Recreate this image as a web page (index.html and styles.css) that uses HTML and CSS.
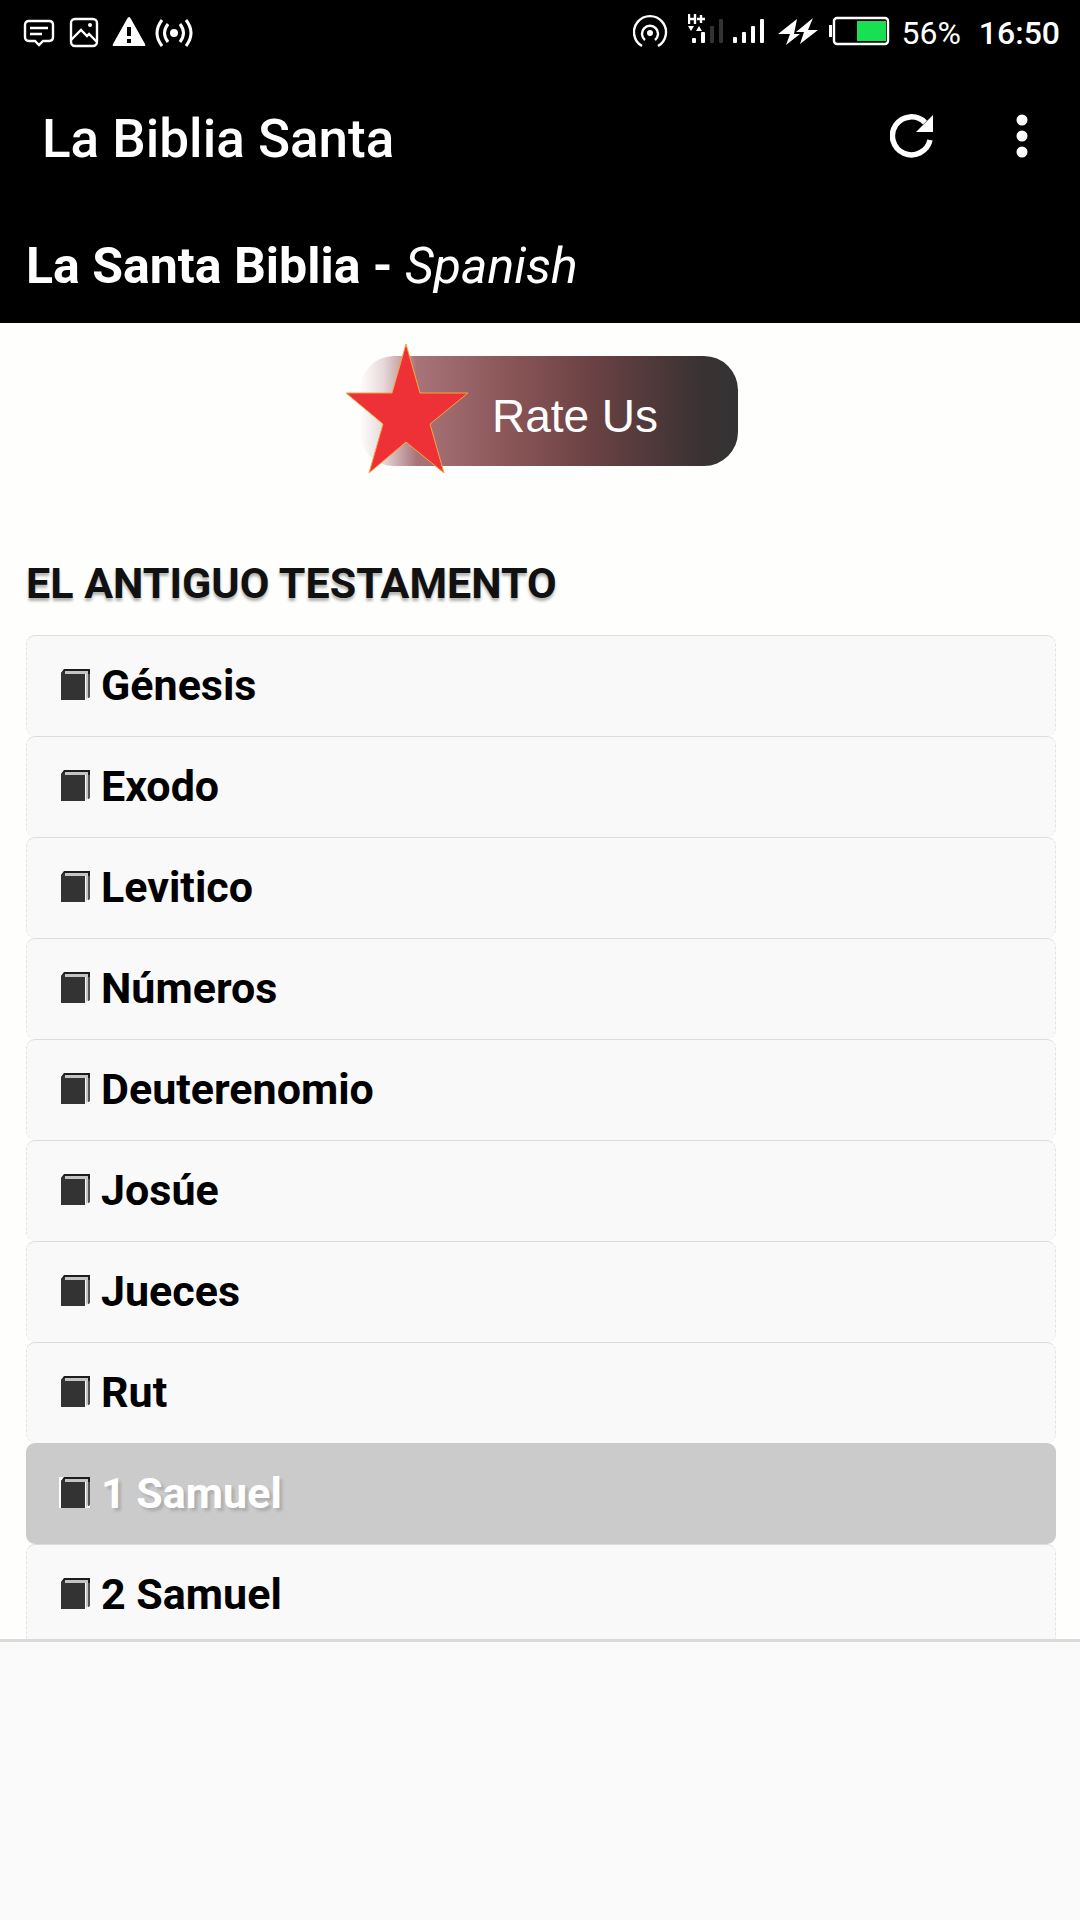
FILE: index.html
```html
<!DOCTYPE html>
<html lang="es">
<head>
    <meta charset="UTF-8">
    <meta name="viewport" content="width=device-width, initial-scale=1.0">
    <title>La Biblia Santa</title>
    <link rel="stylesheet" href="styles.css">
</head>
<body>
    <div class="status-bar">
        <div class="status-left">
            <svg width="38" height="36" viewBox="0 0 38 36" fill="none" stroke="#fff" stroke-width="2.400">
                <path d="M9 6h20q4 0 4 4v12q0 4-4 4h-6l-4 4-4-4H9q-4 0-4-4V10q0-4 4-4zM10 13h18M10 19h12"/>
            </svg>
            <svg width="38" height="36" viewBox="0 0 38 36" fill="none" stroke="#fff" stroke-width="2.400">
                <rect x="6" y="4" width="26" height="27" rx="4"/>
                <path d="M6 25l10-10 6 6 2-2 8 8"/>
                <circle cx="25" cy="10" r="2" fill="#fff" stroke="none"/>
            </svg>
            <svg width="38" height="36" viewBox="0 0 38 36">
                <path d="M19 2q1 0 2 2l14 25q1 2-1 2H4q-2 0-1-2L17 4q1-2 2-2z" fill="#fff"/>
                <path d="M17 12h4v9h-4zM17 24h4v4h-4z" fill="#000"/>
            </svg>
            <svg width="38" height="36" viewBox="0 0 38 36" fill="none" stroke="#fff" stroke-width="3">
                <circle cx="19" cy="18" r="4" fill="#fff" stroke="none"/>
                <path d="M13 9q-7 9 0 18M25 9q7 9 0 18M7 5q-10 13 0 26M31 5q10 13 0 26"/>
            </svg>
        </div>
        <div class="status-right">
            <svg width="47" height="36" viewBox="0 0 47 36" fill="none" stroke="#fff" stroke-width="2.400">
                <path d="M9 32A16 16 0 1 1 25 32M12 26A8 8 0 1 1 22 26"/>
                <circle cx="17" cy="19" r="3" fill="#fff" stroke="none"/>
            </svg>
            <svg width="37" height="36" viewBox="0 0 37 36">
                <path d="M1 0v10M7 0v10M1 5h6M9 5h8M13 1v8" stroke="#fff" stroke-width="2.400" fill="none"/>
                <path d="M0 12h6l-3 5zM8 17h6l-3-5z" fill="#fff"/>
                <rect x="4" y="24" width="4" height="5" rx="1" fill="#fff"/>
                <rect x="13" y="18" width="4" height="11" rx="1" fill="#fff"/>
                <rect x="22" y="12" width="4" height="17" rx="1" fill="#333"/>
                <rect x="31" y="5" width="4" height="24" rx="1" fill="#333"/>
            </svg>
            <svg width="35" height="36" viewBox="0 0 35 36" fill="#fff">
                <rect x="0" y="23" width="4" height="6" rx="1"/>
                <rect x="9" y="18" width="4" height="11" rx="1"/>
                <rect x="18" y="12" width="4" height="17" rx="1"/>
                <rect x="27" y="5" width="4" height="24" rx="1"/>
            </svg>
            <svg width="43" height="36" viewBox="0 0 43 36" fill="#fff">
                <path d="M21 5L2 20h12L10 31 24 20h-6zM37 4L20 18h8l-4 12 18-14H32z"/>
            </svg>
            <svg width="66" height="36" viewBox="0 0 66 36">
                <rect x="2" y="11" width="3" height="12" fill="#fff"/>
                <rect x="7" y="4" width="54" height="26" rx="3" fill="none" stroke="#fff" stroke-width="2.400"/>
                <rect x="30" y="7" width="29" height="20" fill="#19e052"/>
            </svg>
            <span class="battery-level">56%</span>
            <span class="clock">16:50</span>
        </div>
    </div>

    <header class="app-bar">
        <span class="app-title">La Biblia Santa</span>
        <button type="button" class="icon-button" aria-label="Recargar">
            <svg width="44" height="44" viewBox="0 0 44 44">
                <path d="M40 26A19 19 0 1 1 35 8.500" fill="none" stroke="#fff" stroke-width="5.500"/>
                <path d="M43 1v17H26z" fill="#fff"/>
            </svg>
        </button>
        <button type="button" class="icon-button" aria-label="Menú">
            <svg width="12" height="44" viewBox="0 0 12 44" fill="#fff">
                <circle cx="6" cy="6" r="5.500"/>
                <circle cx="6" cy="22" r="5.500"/>
                <circle cx="6" cy="38" r="5.500"/>
            </svg>
        </button>
    </header>

    <h1>La Santa Biblia - <i>Spanish</i></h1>

    <main>
        <button type="button" class="rate-button">
            <svg class="star" width="124" height="132" viewBox="0 0 124 132">
                <path d="M61 2L75 51H123L85 82 99 131 61 100 24 131 38 82 1 51H47z" fill="#ee3136" stroke="#f3a83c" stroke-width="1"/>
            </svg>
            Rate Us
        </button>

        <h2>EL ANTIGUO TESTAMENTO</h2>
        <nav class="books">
            <a href="#genesis">Génesis</a>
            <a href="#exodo">Exodo</a>
            <a href="#levitico">Levitico</a>
            <a href="#numeros">Números</a>
            <a href="#deuterenomio">Deuterenomio</a>
            <a href="#josue">Josúe</a>
            <a href="#jueces">Jueces</a>
            <a href="#rut">Rut</a>
            <a href="#samuel1" class="active">1 Samuel</a>
            <a href="#samuel2">2 Samuel</a>
        </nav>
    </main>

    <footer class="ad-space"></footer>

    <script>
        // same book icon in front of every entry
        const bookIcon = `
            <svg class="book" width="31" height="31" viewBox="0 0 31 31">
                <path class="page" d="M0 0H31V31H0z"/>
                <path d="M2 4L5 0H31V28L29 29V5H6L5 5z" fill="#1c1c1c"/>
                <path d="M6 2H29V28L27 30V5H6z" fill="#c4c4c4"/>
                <path d="M29 5H31V28H29z" fill="#555"/>
                <path d="M2 4L6 2V5H26V31H2z" fill="#333"/>
            </svg>`;
        document.querySelectorAll('.books a').forEach(link => {
            link.insertAdjacentHTML('afterbegin', bookIcon);
        });
    </script>
</body>
</html>
```
FILE: styles.css
```css
* {
    box-sizing: border-box;
}

body {
    font-family: Roboto, sans-serif;
    background-color: #fefefd;
    color: #000;
    margin: 0;
    display: flex;
    flex-direction: column;
    height: 100vh;
    overflow: hidden;
}

svg {
    display: block;
    flex-shrink: 0;
}

button {
    font-family: inherit;
    background: none;
    border: none;
    padding: 0;
    cursor: pointer;
}

.status-bar {
    display: flex;
    justify-content: space-between;
    align-items: center;
    height: 64px;
    padding: 1px 20px 0;
    background-color: #000;
    color: #fff;
    font-size: 32px;
    line-height: 38px;
    flex-shrink: 0;
}

.status-left {
    display: flex;
    gap: 7px;
}

.status-right {
    display: flex;
    gap: 8px;
}

.clock {
    font-weight: 500;
    margin-left: 10px;
}

.app-bar {
    display: flex;
    align-items: center;
    gap: 82px;
    height: 144px;
    padding: 0 52px 0 42px;
    background-color: #000;
    color: #fff;
    flex-shrink: 0;
}

.app-title {
    flex: 1;
    padding-top: 6px;
    font-size: 53px;
    font-weight: 500;
}

h1 {
    margin: 0;
    padding: 1px 26px 0;
    background-color: #000;
    color: #fff;
    font-size: 50px;
    font-weight: bold;
    line-height: 114px;
    flex-shrink: 0;
}

h1 i {
    font-weight: normal;
}

main {
    flex: 1;
    min-height: 0;
    overflow: hidden;
    padding: 33px 24px 0 26px;
}

.rate-button {
    display: block;
    position: relative;
    width: 378px;
    height: 110px;
    margin: 0 auto 92px;
    padding: 10px 0 0 52px;
    border-radius: 34px;
    background: linear-gradient(to right, #fefefd 0%, #e8dadb 6%, #a87479 15%, #8c5759 38%, #6a4143 62%, #3a3233 90%, #333 100%);
    color: #fff;
    font-family: "Liberation Sans", Arial, sans-serif;
    font-size: 46px;
    left: 8px;
}

.star {
    position: absolute;
    left: -15px;
    top: -14px;
}

h2 {
    margin: 0 0 27px;
    color: #111;
    font-size: 43px;
    line-height: 50px;
    text-shadow: 0 3px 3px rgba(0, 0, 0, 0.3);
}

.books a {
    display: flex;
    align-items: center;
    gap: 11px;
    height: 101px;
    padding: 0 0 3px 32px;
    background-color: #f9f9f9;
    border: 1px dashed #e2e2e2;
    border-top: 1px solid #ddd;
    border-bottom: none;
    border-radius: 9px;
    color: #000;
    font-size: 43px;
    font-weight: bold;
    text-decoration: none;
}

.books a.active {
    background-color: #cbcbcb;
    border-color: #cbcbcb;
    color: #fff;
    text-shadow: 3px 3px 3px rgba(0, 0, 0, 0.15);
}

.page {
    fill: none;
}

.active .page {
    fill: #fff;
}

.ad-space {
    height: 281px;
    background-color: #fafafa;
    border-top: 3px solid #dadada;
    flex-shrink: 0;
}
```
